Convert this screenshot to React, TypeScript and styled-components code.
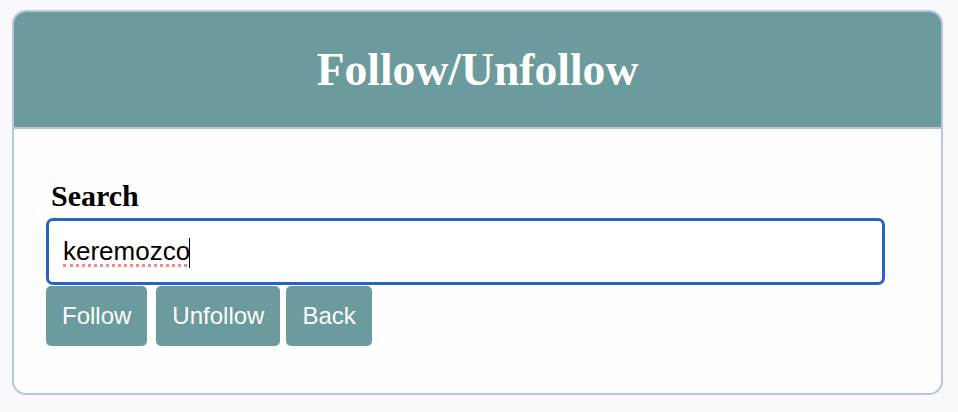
import styled, { createGlobalStyle } from "styled-components";

const Global = createGlobalStyle`
  html, body {
    margin: 0;
    background: #f8f8fd;
  }
`;

const Page = styled.div`
  padding: 10px 15px 0 12px;
`;

const Card = styled.div`
  border: 2px solid #b7c5dd;
  border-radius: 14px;
  overflow: hidden;
  background: #fefefe;
`;

const Header = styled.header`
  height: 115px;
  background: #6b9b9c;
  border-bottom: 2px solid #b7c5dd;
  display: flex;
  align-items: center;
  justify-content: center;
`;

const Title = styled.h1`
  margin: 0;
  font-family: "Liberation Serif", "Times New Roman", serif;
  font-weight: bold;
  font-size: 45.6px;
  color: #ffffff;
`;

const Body = styled.div`
  padding: 52px 32px 47px 32px;
  display: flex;
  flex-direction: column;
  align-items: flex-start;
`;

const Label = styled.label`
  font-family: "Liberation Serif", "Times New Roman", serif;
  font-weight: bold;
  font-size: 30px;
  line-height: 30px;
  color: #000;
  margin: 0 0 7px 5px;
`;

const Field = styled.div`
  position: relative;
`;

const Input = styled.input`
  box-sizing: border-box;
  display: block;
  width: 839px;
  height: 67px;
  border: 3px solid #2563c4;
  border-radius: 7px;
  padding: 0 14px;
  font-family: "Liberation Sans", Arial, sans-serif;
  font-size: 26px;
  color: #000;
  outline: none;
  background: #fff;
  caret-color: transparent;
`;

/* spell-check squiggle and caret drawn over the field */
const Squiggle = styled.span`
  position: absolute;
  left: 17px;
  top: 46px;
  width: 124px;
  height: 0;
  border-bottom: 3px dotted #ef8a8a;
  pointer-events: none;
`;

const Caret = styled.span`
  position: absolute;
  left: 143px;
  top: 20px;
  width: 1px;
  height: 30px;
  background: #000;
  pointer-events: none;
`;

const Actions = styled.div`
  display: flex;
  margin-top: 1px;
`;

const Button = styled.button<{ $gap?: number }>`
  height: 60px;
  padding: 0 16px;
  margin-right: ${(p) => p.$gap ?? 0}px;
  border: none;
  border-radius: 5px;
  background: #6b9b9c;
  color: #ffffff;
  font-family: "Liberation Sans", Arial, sans-serif;
  font-size: 24px;
  cursor: pointer;
`;

const App = () => {
  return (
    <>
      <Global />
      <Page>
        <Card>
          <Header>
            <Title>Follow/Unfollow</Title>
          </Header>
          <Body>
            <Label htmlFor="search">Search</Label>
            <Field>
              <Input id="search" defaultValue="keremozco" spellCheck={false} />
              <Squiggle />
              <Caret />
            </Field>
            <Actions>
              <Button $gap={9}>Follow</Button>
              <Button $gap={6}>Unfollow</Button>
              <Button>Back</Button>
            </Actions>
          </Body>
        </Card>
      </Page>
    </>
  );
};

export default App;
